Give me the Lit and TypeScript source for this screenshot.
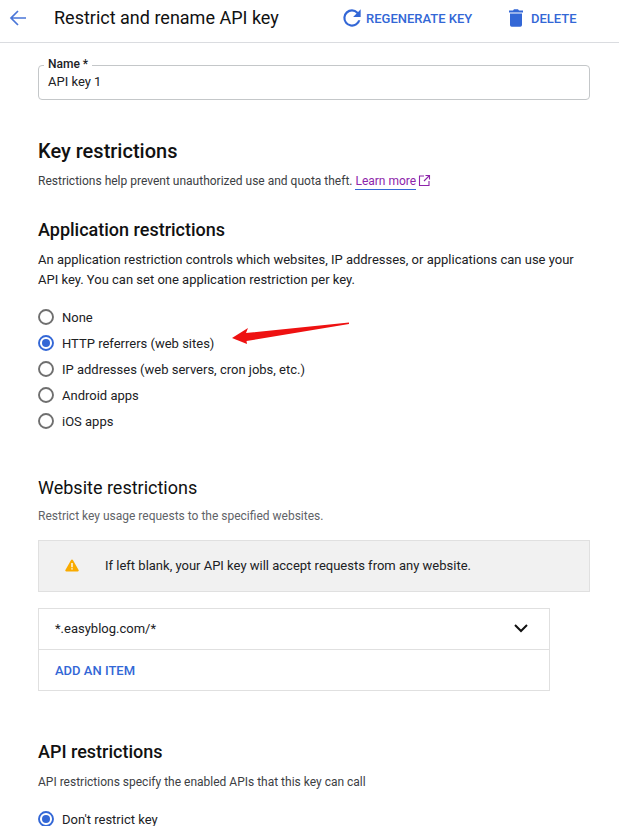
import { LitElement, html, css, svg } from "lit";
import { customElement } from "lit/decorators.js";

const radio = (on: boolean) => svg`<svg class="radio" width="20" height="20" viewBox="0 0 20 20">
  <circle cx="10" cy="10" r="7" fill="none" stroke="${on ? "#3367d6" : "#6f6f6f"}" stroke-width="1.9"></circle>
  ${on ? svg`<circle cx="10" cy="10" r="4" fill="#3367d6"></circle>` : ""}
</svg>`;

@customElement("app-root")
export class AppRoot extends LitElement {
  static styles = css`
    :host { display: block; position: relative; height: 826px; overflow: hidden; background: #fff; color: #202124; font-family: Roboto, "Liberation Sans", sans-serif; font-size: 13px; }
    .top { height: 36px; padding-bottom: 6px; border-bottom: 1px solid #dadce0; display: flex; align-items: center; box-sizing: content-box; }
    .back { margin-left: 8px; width: 20px; height: 20px; flex: none; }
    .title { margin-left: 26px; font-size: 18px; line-height: 36px; width: 285px; flex: none; color: #111; }
    .act { display: flex; align-items: center; color: #3367d6; font-weight: 500; font-size: 13px; }
    .act.regen { width: 169px; flex: none; gap: 1px; }
    .act.del { gap: 7px; }
    main { padding: 22px 29px 0 38px; }
    .field { position: relative; height: 35px; box-sizing: border-box; border: 1px solid #c4c7c9; border-radius: 4px; padding: 0 0 2px 9px; display: flex; align-items: center; font-size: 13px; margin-bottom: 39px; }
    .field label { position: absolute; left: 5px; top: -9px; padding: 0 4px; background: #fff; font-size: 12px; line-height: 14px; font-weight: 500; }
    h2 { margin: 0; font-weight: 500; color: #111; }
    .h-lg { font-size: 20px; line-height: 24px; }
    .h-md { font-size: 18px; line-height: 24px; }
    p { margin: 0; line-height: 20px; }
    .lead { font-size: 12px; margin-top: 8px; color: #3c4043; }
    .link { color: #8e24aa; border-bottom: 1px solid #3367d6; padding-bottom: 1px; }
    .ext { vertical-align: -2px; margin-left: 2px; }
    .app { margin-top: 27px; }
    .desc { margin-top: 8px; width: 545px; }
    .radios { display: flex; flex-direction: column; margin-top: 14px; }
    .row { height: 26px; display: flex; align-items: center; gap: 6px; margin-left: -2px; }
    .radio { flex: none; }
    .web { margin-top: 42px; font-weight: 400; }
    .muted { font-size: 12px; margin-top: 6px; color: #5f6368; }
    .notice { margin-top: 14px; height: 52px; box-sizing: border-box; background: #f1f1f1; border: 1px solid #e0e0e0; display: flex; align-items: center; padding: 0 0 2px 26px; gap: 26px; }
    .list { margin-top: 16px; width: 512px; box-sizing: border-box; border: 1px solid #e0e0e0; }
    .item { height: 41px; box-sizing: border-box; padding: 0 20px 2px 16px; display: flex; align-items: center; justify-content: space-between; border-bottom: 1px solid #e0e0e0; }
    .add { height: 40px; padding-left: 16px; display: flex; align-items: center; color: #3367d6; font-weight: 500; font-size: 13px; }
    .api { margin-top: 49px; }
    .arrow { position: absolute; left: 230px; top: 321px; }
  `;

  render() {
    return html`
      <header class="top">
        <svg class="back" viewBox="0 0 20 20"><path d="M18 10H3M10 3l-7 7 7 7" fill="none" stroke="#4a76d8" stroke-width="1.7"></path></svg>
        <div class="title">Restrict and rename API key</div>
        <div class="act regen">
          <svg width="26" height="26" viewBox="0 0 24 24"><path fill="#3367d6" d="M17.65 6.35A7.96 7.96 0 0 0 12 4a8 8 0 1 0 7.73 10h-2.08A6 6 0 1 1 12 6c1.66 0 3.14.69 4.22 1.78L13 11h7V4l-2.35 2.35z"></path></svg>
          <span>REGENERATE KEY</span>
        </div>
        <div class="act del">
          <svg width="16" height="20" viewBox="0 0 16 20"><path fill="#3367d6" d="M2 5.500h12v11.500a1.700 1.700 0 0 1-1.700 1.700H3.700a1.700 1.700 0 0 1-1.700-1.700zM1 2.500h4L6 1.300h4l1 1.200h4V4.500H1z"></path></svg>
          <span>DELETE</span>
        </div>
      </header>
      <main>
        <div class="field"><label>Name *</label>API key 1</div>
        <h2 class="h-lg">Key restrictions</h2>
        <p class="lead">Restrictions help prevent unauthorized use and quota theft. <span class="link">Learn more</span><svg class="ext" width="13" height="13" viewBox="0 0 13 13"><path d="M6 2H1.500v9.500H11V7M7.500 1.500H11.500V5.500M11.500 1.500L6 7" fill="none" stroke="#8e24aa" stroke-width="1.100"></path></svg></p>
        <h2 class="h-md app">Application restrictions</h2>
        <p class="desc">An application restriction controls which websites, IP addresses, or applications can use your API key. You can set one application restriction per key.</p>
        <div class="radios">
          <div class="row">${radio(false)}<span>None</span></div>
          <div class="row">${radio(true)}<span>HTTP referrers (web sites)</span></div>
          <div class="row">${radio(false)}<span>IP addresses (web servers, cron jobs, etc.)</span></div>
          <div class="row">${radio(false)}<span>Android apps</span></div>
          <div class="row">${radio(false)}<span>iOS apps</span></div>
        </div>
        <h2 class="h-md web">Website restrictions</h2>
        <p class="muted">Restrict key usage requests to the specified websites.</p>
        <div class="notice">
          <svg width="14" height="13" viewBox="0 0 14 13"><path fill="#f9ab00" d="M7 .5c.4 0 .7.2.9.5l5.700 10c.4.7-.1 1.500-.9 1.500H1.300c-.8 0-1.300-.8-.9-1.500L6.100 1c.2-.3.5-.5.9-.5z"></path><path fill="#fff" d="M6.300 4h1.400v4.200H6.300zM6.300 9.200h1.400v1.400H6.300z"></path></svg>
          <span>If left blank, your API key will accept requests from any website.</span>
        </div>
        <div class="list">
          <div class="item"><span>*.easyblog.com/*</span>
            <svg width="16" height="10" viewBox="0 0 16 10"><path d="M2 2L8 8 14 2" fill="none" stroke="#111" stroke-width="2"></path></svg>
          </div>
          <div class="add">ADD AN ITEM</div>
        </div>
        <h2 class="h-md api">API restrictions</h2>
        <p class="lead">API restrictions specify the enabled APIs that this key can call</p>
        <div class="radios"><div class="row">${radio(true)}<span>Don't restrict key</span></div></div>
      </main>
      <svg class="arrow" width="122" height="30" viewBox="0 0 122 30"><path fill="#ee1111" d="M119 1.500 L16 12 L18 7 L2 17 L17 23 L16.500 20 L119 3 Z"></path></svg>
    `;
  }
}
